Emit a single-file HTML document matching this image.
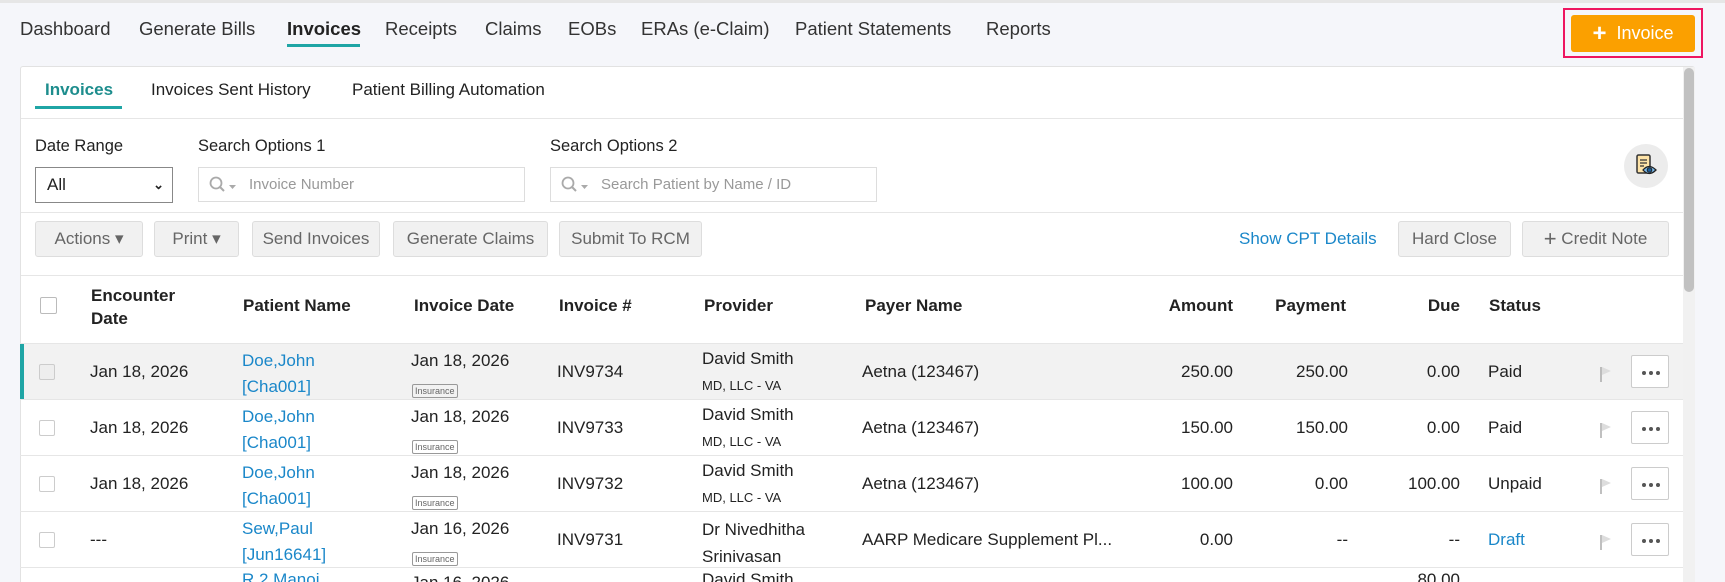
<!DOCTYPE html>
<html><head><meta charset="utf-8"><style>
*{box-sizing:border-box;margin:0;padding:0}
html,body{width:1725px;height:582px;overflow:hidden}
body{background:#f5f6fa;font-family:"Liberation Sans",sans-serif;color:#222;position:relative}
.a{position:absolute;white-space:nowrap}
.nav{top:18px;font-size:18.5px;color:#333}
.sub{top:80px;font-size:17px;color:#222}
.lbl{font-size:16.5px;color:#222}
.inp{position:absolute;border:1px solid #ddd;background:#fff;height:35px;top:167px}
.btn{position:absolute;top:221px;height:36px;background:#f1f1f1;border:1px solid #ddd;border-radius:3px;color:#666;font-size:17px;line-height:34px;text-align:center}
.th{font-size:17px;font-weight:bold;color:#222}
.row{position:absolute;left:20px;width:1663px;height:56px;border-top:1px solid #e6e6e6;font-size:17px}
.cb{position:absolute;left:19px;top:20px;width:16px;height:16px;border:1px solid #ccc;background:#fff;border-radius:2px}
.lnk{color:#1a87c9}
.tag{display:inline-block;font-size:9px;border:1px solid #999;color:#666;padding:0 2px;border-radius:2px;line-height:12px}
.more{position:absolute;left:1611px;top:11px;width:38px;height:33px;border:1px solid #ccc;background:#fff;border-radius:2px}
.more i{position:absolute;top:15px;width:4px;height:4px;border-radius:50%;background:#555}
.flag{position:absolute;left:1580px;top:22px}
</style></head><body>
<div class="a" style="left:0;top:0;width:1725px;height:3px;background:#e6e6e6"></div>
<div class="a nav" style="left:20px">Dashboard</div>
<div class="a nav" style="left:139px">Generate Bills</div>
<div class="a nav" style="left:287px;font-weight:bold;color:#222">Invoices</div>
<div class="a" style="left:287px;top:44px;width:73px;height:3px;background:#1fa5a5"></div>
<div class="a nav" style="left:385px">Receipts</div>
<div class="a nav" style="left:485px">Claims</div>
<div class="a nav" style="left:568px">EOBs</div>
<div class="a nav" style="left:641px">ERAs (e-Claim)</div>
<div class="a nav" style="left:795px">Patient Statements</div>
<div class="a nav" style="left:986px">Reports</div>
<div class="a" style="left:1563px;top:8px;width:140px;height:50px;border:2px solid #ee1660"></div>
<div class="a" style="left:1571px;top:15px;width:124px;height:37px;background:#fba000;border-radius:3px;color:#fff;font-size:18px;line-height:37px;text-align:center"><b style="font-size:24px;vertical-align:-2px">+</b>&nbsp;&nbsp;Invoice</div>

<div class="a" style="left:20px;top:66px;width:1675px;height:516px;background:#fff;border:1px solid #e2e2e2;border-bottom:none;border-radius:3px 3px 0 0"></div>
<div class="a" style="left:1683px;top:67px;width:12px;height:515px;background:#f1f1f1"></div>
<div class="a" style="left:1684px;top:68px;width:10px;height:224px;background:#c1c1c1;border-radius:5px"></div>

<div class="a sub" style="left:45px;color:#1d8d8d;font-weight:bold">Invoices</div>
<div class="a" style="left:35px;top:106px;width:87px;height:3px;background:#1fa5a5"></div>
<div class="a sub" style="left:151px">Invoices Sent History</div>
<div class="a sub" style="left:352px">Patient Billing Automation</div>
<div class="a" style="left:21px;top:118px;width:1662px;height:1px;background:#e6e6e6"></div>

<div class="a lbl" style="left:35px;top:137px">Date Range</div>
<div class="a lbl" style="left:198px;top:137px">Search Options 1</div>
<div class="a lbl" style="left:550px;top:137px">Search Options 2</div>
<div class="a" style="left:35px;top:167px;width:138px;height:36px;border:1px solid #888;background:#fff;font-size:17px;line-height:34px;padding-left:11px">All<span style="position:absolute;right:8px;font-size:13px;font-weight:bold">&#8964;</span></div>
<div class="inp" style="left:198px;width:327px"><svg class="a" style="left:10px;top:8px" width="34" height="18"><circle cx="7" cy="7" r="5.5" fill="none" stroke="#aaa" stroke-width="1.8"/><path d="M11 11l4 4" stroke="#aaa" stroke-width="2"/><path d="M20 9h7l-3.5 4z" fill="#aaa"/></svg><span class="a" style="left:50px;top:8px;color:#999;font-size:15px">Invoice Number</span></div>
<div class="inp" style="left:550px;width:327px"><svg class="a" style="left:10px;top:8px" width="34" height="18"><circle cx="7" cy="7" r="5.5" fill="none" stroke="#aaa" stroke-width="1.8"/><path d="M11 11l4 4" stroke="#aaa" stroke-width="2"/><path d="M20 9h7l-3.5 4z" fill="#aaa"/></svg><span class="a" style="left:50px;top:8px;color:#999;font-size:15px">Search Patient by Name / ID</span></div>
<div class="a" style="left:1624px;top:144px;width:44px;height:44px;border-radius:50%;background:#ececec"></div>
<svg class="a" style="left:1634px;top:153px" width="26" height="26" viewBox="0 0 26 26"><rect x="3" y="2" width="13" height="18" rx="1.5" fill="#fde3a7" stroke="#333" stroke-width="1.5"/><path d="M6 7h7M6 10h7M6 13h4" stroke="#333" stroke-width="1.2"/><path d="M9 17q6-7 13 0q-7 7-13 0z" fill="#7ab8e8" stroke="#222" stroke-width="1.3"/><circle cx="15.5" cy="17" r="2.3" fill="#1a5d9a" stroke="#222" stroke-width="1"/></svg>
<div class="a" style="left:21px;top:212px;width:1662px;height:1px;background:#e6e6e6"></div>

<div class="btn" style="left:35px;width:108px">Actions &#9662;</div>
<div class="btn" style="left:154px;width:85px">Print &#9662;</div>
<div class="btn" style="left:252px;width:128px">Send Invoices</div>
<div class="btn" style="left:393px;width:155px">Generate Claims</div>
<div class="btn" style="left:559px;width:143px">Submit To RCM</div>
<div class="a" style="left:1239px;top:229px;color:#1a87c9;font-size:17px">Show CPT Details</div>
<div class="btn" style="left:1398px;width:113px">Hard Close</div>
<div class="btn" style="left:1522px;width:147px"><span style="font-size:22px;vertical-align:-2px">+</span> Credit Note</div>
<div class="a" style="left:21px;top:275px;width:1662px;height:1px;background:#e6e6e6"></div>

<div class="a" style="left:40px;top:297px;width:17px;height:17px;border:1px solid #bbb;background:#fff;border-radius:2px"></div>
<div class="a th" style="left:91px;top:284px;line-height:23px">Encounter<br>Date</div>
<div class="a th" style="left:243px;top:296px">Patient Name</div>
<div class="a th" style="left:414px;top:296px">Invoice Date</div>
<div class="a th" style="left:559px;top:296px">Invoice #</div>
<div class="a th" style="left:704px;top:296px">Provider</div>
<div class="a th" style="left:865px;top:296px">Payer Name</div>
<div class="a th" style="left:1233px;top:296px;transform:translateX(-100%)">Amount</div>
<div class="a th" style="left:1346px;top:296px;transform:translateX(-100%)">Payment</div>
<div class="a th" style="left:1460px;top:296px;transform:translateX(-100%)">Due</div>
<div class="a th" style="left:1489px;top:296px">Status</div>

<div class="row" style="top:343px;background:#f2f2f2"><div class="a" style="left:0;top:0;width:4px;height:56px;background:#1fa5a5"></div><div class="cb" style="background:#eee"></div>
<div class="a" style="left:70px;top:18px">Jan 18, 2026</div><div class="a lnk" style="left:222px;top:4px;line-height:26px">Doe,John<br>[Cha001]</div>
<div class="a" style="left:391px;top:7px">Jan 18, 2026</div><div class="a" style="left:392px;top:35px"><span class="tag">Insurance</span></div>
<div class="a" style="left:537px;top:18px">INV9734</div><div class="a" style="left:682px;top:5px">David Smith</div><div class="a" style="left:682px;top:34px;font-size:13px">MD, LLC - VA</div>
<div class="a" style="left:842px;top:18px">Aetna (123467)</div><div class="a" style="left:1213px;top:18px;transform:translateX(-100%)">250.00</div><div class="a" style="left:1328px;top:18px;transform:translateX(-100%)">250.00</div><div class="a" style="left:1440px;top:18px;transform:translateX(-100%)">0.00</div><div class="a" style="left:1468px;top:18px">Paid</div>
<svg class="flag" width="12" height="16"><path d="M1 1v15" stroke="#aaa" stroke-width="1.5"/><path d="M2 1l9 4-9 4z" fill="#ddd"/></svg><div class="more"><i style="left:10px"></i><i style="left:17px"></i><i style="left:24px"></i></div></div>

<div class="row" style="top:399px"><div class="cb"></div>
<div class="a" style="left:70px;top:18px">Jan 18, 2026</div><div class="a lnk" style="left:222px;top:4px;line-height:26px">Doe,John<br>[Cha001]</div>
<div class="a" style="left:391px;top:7px">Jan 18, 2026</div><div class="a" style="left:392px;top:35px"><span class="tag">Insurance</span></div>
<div class="a" style="left:537px;top:18px">INV9733</div><div class="a" style="left:682px;top:5px">David Smith</div><div class="a" style="left:682px;top:34px;font-size:13px">MD, LLC - VA</div>
<div class="a" style="left:842px;top:18px">Aetna (123467)</div><div class="a" style="left:1213px;top:18px;transform:translateX(-100%)">150.00</div><div class="a" style="left:1328px;top:18px;transform:translateX(-100%)">150.00</div><div class="a" style="left:1440px;top:18px;transform:translateX(-100%)">0.00</div><div class="a" style="left:1468px;top:18px">Paid</div>
<svg class="flag" width="12" height="16"><path d="M1 1v15" stroke="#aaa" stroke-width="1.5"/><path d="M2 1l9 4-9 4z" fill="#ddd"/></svg><div class="more"><i style="left:10px"></i><i style="left:17px"></i><i style="left:24px"></i></div></div>

<div class="row" style="top:455px"><div class="cb"></div>
<div class="a" style="left:70px;top:18px">Jan 18, 2026</div><div class="a lnk" style="left:222px;top:4px;line-height:26px">Doe,John<br>[Cha001]</div>
<div class="a" style="left:391px;top:7px">Jan 18, 2026</div><div class="a" style="left:392px;top:35px"><span class="tag">Insurance</span></div>
<div class="a" style="left:537px;top:18px">INV9732</div><div class="a" style="left:682px;top:5px">David Smith</div><div class="a" style="left:682px;top:34px;font-size:13px">MD, LLC - VA</div>
<div class="a" style="left:842px;top:18px">Aetna (123467)</div><div class="a" style="left:1213px;top:18px;transform:translateX(-100%)">100.00</div><div class="a" style="left:1328px;top:18px;transform:translateX(-100%)">0.00</div><div class="a" style="left:1440px;top:18px;transform:translateX(-100%)">100.00</div><div class="a" style="left:1468px;top:18px">Unpaid</div>
<svg class="flag" width="12" height="16"><path d="M1 1v15" stroke="#aaa" stroke-width="1.5"/><path d="M2 1l9 4-9 4z" fill="#ddd"/></svg><div class="more"><i style="left:10px"></i><i style="left:17px"></i><i style="left:24px"></i></div></div>

<div class="row" style="top:511px"><div class="cb"></div>
<div class="a" style="left:70px;top:18px">---</div><div class="a lnk" style="left:222px;top:4px;line-height:26px">Sew,Paul<br>[Jun16641]</div>
<div class="a" style="left:391px;top:7px">Jan 16, 2026</div><div class="a" style="left:392px;top:35px"><span class="tag">Insurance</span></div>
<div class="a" style="left:537px;top:18px">INV9731</div><div class="a" style="left:682px;top:4px;line-height:27px">Dr Nivedhitha<br>Srinivasan</div>
<div class="a" style="left:842px;top:18px">AARP Medicare Supplement Pl...</div><div class="a" style="left:1213px;top:18px;transform:translateX(-100%)">0.00</div><div class="a" style="left:1328px;top:18px;transform:translateX(-100%)">--</div><div class="a" style="left:1440px;top:18px;transform:translateX(-100%)">--</div><div class="a lnk" style="left:1468px;top:18px">Draft</div>
<svg class="flag" width="12" height="16"><path d="M1 1v15" stroke="#aaa" stroke-width="1.5"/><path d="M2 1l9 4-9 4z" fill="#ddd"/></svg><div class="more"><i style="left:10px"></i><i style="left:17px"></i><i style="left:24px"></i></div></div>

<div class="row" style="top:567px;height:15px;overflow:hidden"><div class="a lnk" style="left:222px;top:2px">R 2 Manoj</div><div class="a" style="left:391px;top:5px">Jan 16, 2026</div><div class="a" style="left:682px;top:2px">David Smith</div><div class="a" style="left:1440px;top:2px;transform:translateX(-100%)">80.00</div></div>
</body></html>
